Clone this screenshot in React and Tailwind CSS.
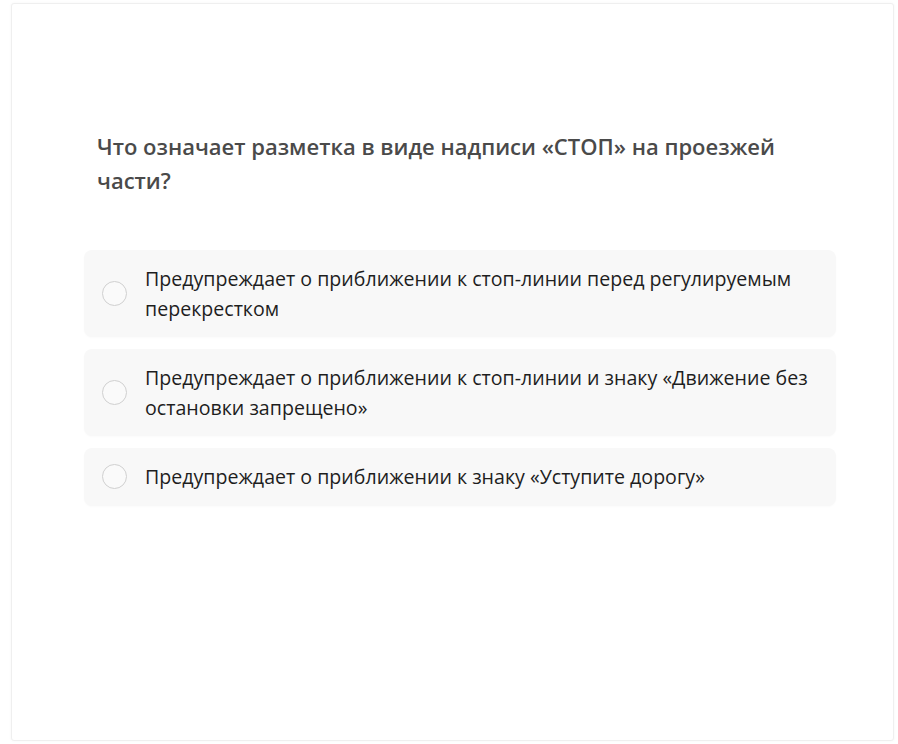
import React from "react";

const options = [
  "Предупреждает о приближении к стоп-линии перед регулируемым перекрестком",
  "Предупреждает о приближении к стоп-линии и знаку «Движение без остановки запрещено»",
  "Предупреждает о приближении к знаку «Уступите дорогу»",
];

export default function App() {
  return (
    <div className="w-[898px] h-[744px] bg-white pt-[3px] pl-[11px] pr-[4px] pb-[3px]" style={{ fontFamily: '"Open Sans", sans-serif' }}>
      <div className="w-full h-full border border-[#efefef] rounded-[3px] shadow-[0_0_3px_rgba(0,0,0,0.04)] bg-white pt-[125px] px-[72px]">
        <div className="pl-[13px] pr-[40px] text-[22px] leading-[34px] font-semibold text-[#4a4a4a]">
          Что означает разметка в виде надписи «СТОП» на проезжей части?
        </div>
        <div className="mt-[53px] flex flex-col gap-[12px] w-[752px]">
          {options.map((o, i) => (
            <div key={i} className="flex items-center bg-[#f8f8f8] rounded-[8px] pl-[18px] pr-[20px] py-[14px] shadow-[0_1px_2px_rgba(0,0,0,0.02)]">
              <div className="w-[25px] h-[25px] rounded-full border-[1.5px] border-[#d0d0d0] bg-[#fafafa] shrink-0" />
              <div className="ml-[18px] text-[19.6px] leading-[29.5px] text-[#1e1e1e]">{o}</div>
            </div>
          ))}
        </div>
      </div>
    </div>
  );
}
